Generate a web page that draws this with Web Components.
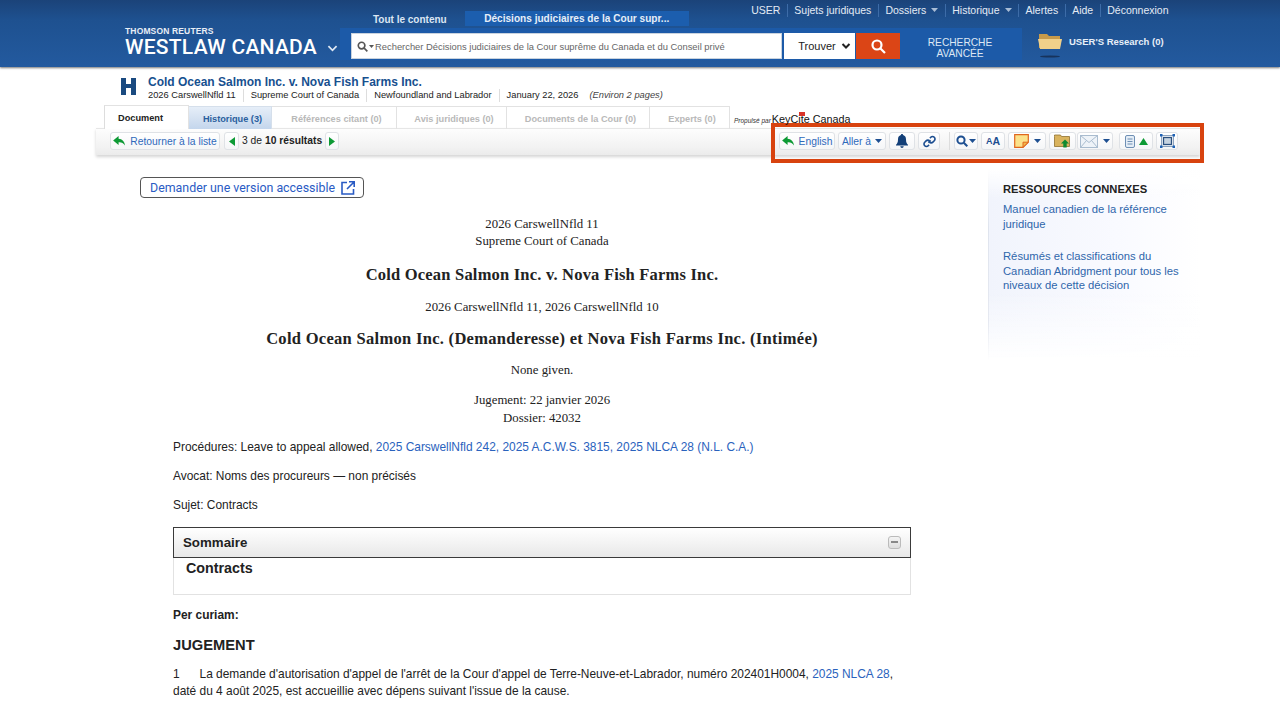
<!DOCTYPE html>
<html lang="fr">
<head>
<meta charset="utf-8">
<title>Westlaw Canada</title>
<style>
html,body{margin:0;padding:0;background:#fff;overflow:hidden}
body{font-family:"Liberation Sans",Arial,sans-serif;font-size:12px;color:#252525;height:722px;position:relative}
</style>
</head>
<body>
<wl-header></wl-header>
<wl-dochead></wl-dochead>
<wl-tabs></wl-tabs>
<wl-toolbar></wl-toolbar>
<wl-main>
  <wl-access slot="top"></wl-access>
  <wl-sidebar slot="side"></wl-sidebar>
</wl-main>
<script>
const ICONS={
  back:'<svg width="13" height="10" viewBox="0 0 14 11"><path d="M6 0 0 5l6 5V7c3-.3 5 .6 7 3.5C12.600 6 10 3.200 6 3z" fill="#0d9a35"/></svg>',
  left:'<svg width="6" height="9" viewBox="0 0 6 9"><path d="M6 0v9L0 4.500z" fill="#0d9a35"/></svg>',
  right:'<svg width="6" height="9" viewBox="0 0 6 9"><path d="M0 0v9l6-4.500z" fill="#0d9a35"/></svg>',
  caret:'<svg width="7" height="4" viewBox="0 0 7 4"><path d="M0 0h7L3.500 4z" fill="#1d4f91"/></svg>',
  bell:'<svg width="14" height="14" viewBox="0 0 14 14"><path d="M7 0c.7 0 1.100.5 1.100 1.100C10 1.700 11 3.300 11 5.500c0 3 .8 4.200 2 5.300v.7H1v-.7c1.200-1.100 2-2.300 2-5.300 0-2.200 1-3.800 2.900-4.400C5.900.5 6.300 0 7 0zM5.300 12.300h3.400C8.600 13.300 7.900 14 7 14s-1.600-.7-1.700-1.700z" fill="#123f78"/></svg>',
  link:'<svg width="13" height="13" viewBox="0 0 15 15" fill="none" stroke="#1d4f91" stroke-width="1.900"><path d="M6.200 8.800 8.800 6.200"/><path d="M8 3.600l1-1a2.800 2.800 0 0 1 4 0 2.800 2.800 0 0 1 0 4l-1.600 1.600a2.800 2.800 0 0 1-4 0"/><path d="M7 11.400l-1 1a2.800 2.800 0 0 1-4 0 2.800 2.800 0 0 1 0-4l1.600-1.600a2.800 2.800 0 0 1 4 0"/></svg>',
  search:'<svg width="12" height="12" viewBox="0 0 12 12" fill="none" stroke="#1d4f91" stroke-width="2"><circle cx="5" cy="5" r="3.600"/><path d="M7.800 7.800 11.300 11.300"/></svg>',
  note:'<svg width="15" height="14" viewBox="0 0 15 14"><path d="M.7.7h13.600v7.500L9 13.300H.7z" fill="#fbe28b" stroke="#e0671f" stroke-width="1.200"/><path d="M9 13.300V8.200h5.300z" fill="#f2b94a" stroke="#e0671f"/></svg>',
  folder:'<svg width="17" height="14" viewBox="0 0 17 14"><path d="M.5 2.500V1h6l1 1.500h8v10H.5z" fill="#d9b35e" stroke="#8f7130" stroke-width=".8"/><path d="M11 5.500 15 9.500h-2.300V13.500H9.300V9.500H7z" fill="#0d8a30"/></svg>',
  mail:'<svg width="18" height="13" viewBox="0 0 18 13" fill="#eef3f8" stroke="#a9bccf"><rect x=".5" y=".5" width="17" height="12"/><path d="M.5.500 9 7.500 17.500.5M.5 12.500 6.500 5.500M17.500 12.500l-6-7" fill="none"/></svg>',
  doc:'<svg width="10" height="13" viewBox="0 0 10 13" fill="#e4edf6" stroke="#6e8fb4"><rect x=".5" y=".5" width="9" height="12" rx="1.500"/><path d="M2.500 4h5M2.500 6.500h5M2.500 9h5" fill="none"/></svg>',
  up:'<svg width="9" height="7" viewBox="0 0 9 7"><path d="M0 7 4.500 0 9 7z" fill="#0d9a35"/></svg>',
  full:'<svg width="15" height="14" viewBox="0 0 15 14"><path d="M1.500 1.500h12v11h-12z" fill="none" stroke="#5d7da3" stroke-width=".7"/><rect x="3.500" y="3.500" width="8" height="7" fill="#c6d3e0" stroke="#2a4f7e" stroke-width="1.300"/><g fill="#1f62b5"><rect width="2.500" height="2.500"/><rect x="12.500" width="2.500" height="2.500"/><rect y="11.500" width="2.500" height="2.500"/><rect x="12.500" y="11.500" width="2.500" height="2.500"/></g></svg>'
}

// one small helper so every element below stays a few lines
function shadow(el,html){
  el.attachShadow({mode:'open'}).innerHTML=html
}

class WlHeader extends HTMLElement{
  connectedCallback(){
    shadow(this,`<style>
      :host{display:flex;height:67px;padding-left:125px;box-sizing:border-box;color:#fff;
        background:linear-gradient(#1b4379 0,#1e5190 30%,#235a9f 100%);box-shadow:0 1px 2px #777}
      .logo{width:226px;padding-top:26px;box-sizing:border-box}
      .tr{font-size:8.500px;font-weight:700;line-height:10px;color:#e8eef6;letter-spacing:.15px}
      .wl{display:flex;align-items:center;margin-top:0;font:500 21px/22px Roboto,sans-serif;letter-spacing:.25px;white-space:nowrap}
      .wl svg{margin-left:10px;margin-top:2px}
      .right{flex:1;display:flex;flex-direction:column}
      .top{display:flex;height:28px;justify-content:space-between;padding-right:105px;padding-left:15px}
      .ctabs{display:flex;align-items:flex-end;font-size:10px;font-weight:700;color:#dbe6f3}
      .ctabs span{padding-bottom:2px;height:13px;line-height:13px;margin-left:7px;margin-right:23px}
      .ctabs b{display:block;width:224px;height:15px;line-height:15px;text-align:center;background:#1c5eae;margin-bottom:2px;color:#e6eef8;font-size:10.100px;margin-left:-5px}
      nav{display:flex;height:20px;align-items:center;font-size:10.500px;color:#e4ebf5}
      nav span{padding:0 6.500px;border-left:1px solid #3d6ca8;line-height:13px;display:flex;align-items:center;gap:5px}
      nav span:first-child{border:0}
      nav svg path{fill:#a9bdd6}
      .band{display:flex;height:32px;width:682px;margin-left:-11px;padding-left:11px;box-sizing:border-box;background:#1c5aa8;align-items:flex-start}
      .bottom{display:flex;align-items:flex-start}
      .box{margin-top:5px;width:431px;height:26px;background:#fff;display:flex;align-items:center;padding-left:5px;box-sizing:border-box;
        font-size:9.400px;color:#666;gap:1px;border:1px solid #c9d3de}
      .find{margin:5px 0 0 2px;width:71px;height:26px;background:#fff;color:#222;font-size:11px;display:flex;align-items:center;justify-content:center;gap:5px;box-sizing:border-box;padding-left:10px}
      .go{margin:5px 0 0 1px;width:44px;height:26px;background:#db4516;display:flex;align-items:center;justify-content:center}
      .adv{width:122px;height:32px;text-align:center;font-size:10.200px;line-height:11px;padding:9px 2px 0 0;box-sizing:border-box;color:#dce7f4}
      .res{display:flex;align-items:flex-start;margin-left:16px;height:28px;font-size:9.500px;font-weight:700;gap:7px;color:#e8eff8;line-height:28px}
      .res svg{margin-top:4px}
    </style>
    <div class="logo"><div class="tr">THOMSON REUTERS</div>
      <div class="wl">WESTLAW CANADA<svg width="11" height="7" viewBox="0 0 9 6" fill="none" stroke="#dfe8f3" stroke-width="1.500"><path d="M1 1l3.500 3.500L8 1"/></svg></div></div>
    <div class="right">
      <div class="top">
        <div class="ctabs"><span>Tout le contenu</span><b>Décisions judiciaires de la Cour supr...</b></div>
        <nav><span>USER</span><span>Sujets juridiques</span><span>Dossiers ${ICONS.caret}</span><span>Historique ${ICONS.caret}</span><span>Alertes</span><span>Aide</span><span>Déconnexion</span></nav>
      </div>
      <div class="bottom">
        <div class="band">
          <div class="box"><svg width="11" height="11" viewBox="0 0 12 12" fill="none" stroke="#555" stroke-width="1.800"><circle cx="5" cy="5" r="3.600"/><path d="M7.800 7.800 11.300 11.300"/></svg><svg width="5" height="3" viewBox="0 0 7 4"><path d="M0 0h7L3.500 4z" fill="#555"/></svg>Rechercher Décisions judiciaires de la Cour suprême du Canada et du Conseil privé</div>
          <div class="find">Trouver <svg width="10" height="6" viewBox="0 0 9 6" fill="none" stroke="#222" stroke-width="2"><path d="M1 1l3.500 3.500L8 1"/></svg></div>
          <div class="go"><svg width="15" height="15" viewBox="0 0 15 15" fill="none" stroke="#fff" stroke-width="2.200"><circle cx="6" cy="6" r="4.500"/><path d="M9.500 9.500 14 14"/></svg></div>
          <div class="adv">RECHERCHE<br>AVANCÉE</div>
        </div>
        <div class="res"><svg width="24" height="26" viewBox="0 0 24 26"><path d="M1 2h8l2 2h11v12H1z" fill="#c79a4a"/><path d="M0 7h24l-2 10H2z" fill="#f0d08a"/><ellipse cx="12" cy="24.500" rx="10" ry="1" fill="#17335c"/></svg>USER'S Research (0)</div>
      </div>
    </div>`)
  }
}

class WlDochead extends HTMLElement{
  connectedCallback(){
    shadow(this,`<style>
      :host{display:flex;height:38px;padding:9px 0 0 121px;box-sizing:border-box;gap:12px}
      svg{margin-top:2px}
      .t{font-size:12px;font-weight:700;color:#17508f;line-height:13px}
      .m{display:flex;align-items:center;font-size:9.300px;color:#222;line-height:13px}
      .m span{padding-right:7px;margin-right:7px;border-right:1px solid #ddd}
      .m span:nth-child(4){border:0;padding-right:2px}
      .m i{margin-left:2px;color:#444}
    </style>
    <svg width="15" height="17" viewBox="0 0 15 17"><path d="M0 0h5v6h5V0h5v17h-5v-7H5v7H0z" fill="#1a4a80"/></svg>
    <div><div class="t">Cold Ocean Salmon Inc. v. Nova Fish Farms Inc.</div>
    <div class="m"><span>2026 CarswellNfld 11</span><span>Supreme Court of Canada</span><span>Newfoundland and Labrador</span><span>January 22, 2026</span><i>(Environ 2 pages)</i></div></div>`)
  }
}

class WlTabs extends HTMLElement{
  connectedCallback(){
    const tabs=[['Document',85,'on'],['Historique (3)',83,'hist'],['Références citant (0)',125,''],['Avis juridiques (0)',110,''],['Documents de la Cour (0)',143,''],['Experts (0)',80,'']]
    shadow(this,`<style>
      :host{display:flex;height:23px;margin-left:104px;position:relative;z-index:1}
      div{box-sizing:border-box;text-align:center;font-size:9.200px;font-weight:700;line-height:24px;color:#b9b9b9;border:1px solid #e2e2e2;border-left:0;border-bottom:0;height:23px;margin-top:1px;padding-left:5px}
      .on{color:#222;background:#fff;border-left:1px solid #ddd;height:24px;margin-top:0;line-height:24px;padding:0 12px 0 0}
      .hist{color:#2a5f9e;background:linear-gradient(#e6eef8,#c4d6ec);border-color:#d5dfeb}
      p{margin:8px 0 0 4px;font-size:6.500px;font-style:italic;color:#333;display:flex;align-items:baseline;gap:1px;height:14px;white-space:nowrap}
      b{font:400 10.800px "Liberation Sans",sans-serif;color:#111;position:relative}
      b::before{content:"";position:absolute;left:27px;top:-1px;width:6px;height:4px;background:#d8342a}
    </style>
    ${tabs.map(t=>`<div class="${t[2]}" style="width:${t[1]}px">${t[0]}</div>`).join('')}
    <p>Propulsé par <b>KeyCite Canada</b></p>`)
  }
}

class WlBtn extends HTMLElement{
  connectedCallback(){
    const w=this.getAttribute('w')
    shadow(this,`<style>
      :host{display:inline-flex;box-sizing:border-box;height:18px;align-items:center;justify-content:center;gap:4px;
        border:1px solid #dfe2e6;border-radius:3px;background:linear-gradient(#fff,#f5f6f7);font-size:10.300px;color:#2e69bb;${w?`width:${w}px;`:''}}
    </style><slot></slot>`)
  }
}

class WlToolbar extends HTMLElement{
  connectedCallback(){
    shadow(this,`<style>
      :host{display:flex;height:27px;margin:0 80px 0 96px;box-sizing:border-box;padding:3px 22px 0 14px;justify-content:space-between;
        background:linear-gradient(#fdfdfd,#f2f2f2 70%,#ebebeb);box-shadow:0 2px 3px #d4d4d4;border-top:1px solid #e6e6e6}
      .g{display:flex;align-items:flex-start;gap:3px}
      .count{font-size:10.300px;line-height:18px;color:#222;margin:0}
      .sep{width:1px;height:18px;background:#ddd;margin:0 1px 0 6px}
    </style>
    <div class="g">
      <wl-btn w="110">${ICONS.back}Retourner à la liste</wl-btn>
      <wl-btn w="15" style="margin-left:1px">${ICONS.left}</wl-btn>
      <span class="count">3 de <b>10 résultats</b></span>
      <wl-btn w="14">${ICONS.right}</wl-btn>
    </div>
    <div class="g">
      <wl-btn w="56">${ICONS.back}English</wl-btn>
      <wl-btn w="48">Aller à ${ICONS.caret}</wl-btn>
      <wl-btn w="26">${ICONS.bell}</wl-btn>
      <wl-btn w="22">${ICONS.link}</wl-btn>
      <span class="sep"></span>
      <wl-btn w="24" style="gap:1px">${ICONS.search}${ICONS.caret}</wl-btn>
      <wl-btn w="24" style="color:#1d4f91;font-weight:700;font-size:10.500px;gap:0"><span style="font-size:9px">A</span>A</wl-btn>
      <wl-btn w="38" style="gap:5px">${ICONS.note}${ICONS.caret}</wl-btn>
      <wl-btn w="27">${ICONS.folder}</wl-btn>
      <wl-btn w="36" style="margin-left:-2px;gap:5px">${ICONS.mail}${ICONS.caret}</wl-btn>
      <wl-btn w="34" style="margin-left:3px">${ICONS.doc}${ICONS.up}</wl-btn>
      <wl-btn w="22">${ICONS.full}</wl-btn>
    </div>`)
  }
}

class WlAccess extends HTMLElement{
  connectedCallback(){
    shadow(this,`<style>
      :host{display:flex;box-sizing:border-box;width:224px;height:21px;margin-left:44px;align-items:center;gap:6px;padding-left:9px;
        border:1.500px solid #555;border-radius:4px;font:400 12.400px Roboto,sans-serif;color:#2a5bc4;white-space:nowrap}
    </style>Demander une version accessible
    <svg width="14" height="14" viewBox="0 0 14 14" fill="none" stroke="#2a5bc4" stroke-width="1.600"><path d="M6 1.500H1v11.500h11.500V8M8 .8h5.200V6M13 1 6 8"/></svg>`)
  }
}

class WlSidebar extends HTMLElement{
  connectedCallback(){
    shadow(this,`<style>
      :host{display:block;width:212px;height:190px;box-sizing:border-box;padding:12px 15px 0 14px;margin-top:-7px;
        background:linear-gradient(#fff0 65%,#fff),linear-gradient(#fff,#fff0 15%),linear-gradient(to right,#f1f4fc,#f9faff 60%,#fff);
        border-left:1px solid;border-image:linear-gradient(#fff,#dfe4ee 30%,#e6e9f1 80%,#fff) 1;font-size:11.250px;line-height:14.500px;color:#2f66ab}
      h3{margin:0 0 6px;font-size:11.200px;font-weight:700;color:#222;line-height:14px}
      p{margin:0 0 18px}
    </style>
    <h3>RESSOURCES CONNEXES</h3>
    <p>Manuel canadien de la référence juridique</p>
    <p>Résumés et classifications du Canadian Abridgment pour tous les niveaux de cette décision</p>`)
  }
}

class WlMain extends HTMLElement{
  connectedCallback(){
    shadow(this,`<style>
      :host{display:block;margin-left:96px;padding-top:22px;width:1104px;position:relative}
      .cols{display:grid;grid-template-columns:892px 212px}
      .doc{padding:0 0 0 77px;width:738px;font-size:11.930px;line-height:17px;color:#222}
      .top{height:21px;margin-bottom:18px}
      .c{width:738px;text-align:center;font:12.800px/17.500px "Liberation Serif",serif}
      .h{font:700 16.500px/20px "Liberation Serif",serif;width:738px;text-align:center;letter-spacing:.2px}
      p{margin:0}
      a{color:#2a62bd}
      .sum{margin-top:13px;border:1px solid #e2e2e2;border-top:0;height:67px}
      .bar{height:31px;margin:0 -1px;box-sizing:border-box;border:1px solid #3a3a3a;background:linear-gradient(#fff,#e8e8e8);display:flex;align-items:center;justify-content:space-between;padding:0 9px;font-size:13.300px;font-weight:700}
      .bar i{display:block;width:11px;height:11px;border:1px solid #bbb;border-radius:3px;background:linear-gradient(#f4f4f4,#ddd);position:relative}
      .bar i::after{content:"";position:absolute;left:2px;right:2px;top:4px;height:2px;background:#888}
      .con{font-size:14.300px;font-weight:700;padding-left:12px;line-height:18px;margin-top:1px}
    </style>
    <div class="cols"><div>
      <div class="top"><slot name="top"></slot></div>
      <div class="doc">
        <div class="c" style="line-height:17px">2026 CarswellNfld 11<br>Supreme Court of Canada</div>
        <div class="h" style="margin-top:15px">Cold Ocean Salmon Inc. v. Nova Fish Farms Inc.</div>
        <div class="c" style="margin-top:14px">2026 CarswellNfld 11, 2026 CarswellNfld 10</div>
        <div class="h" style="margin-top:12px;letter-spacing:.3px">Cold Ocean Salmon Inc. (Demanderesse) et Nova Fish Farms Inc. (Intimée)</div>
        <div class="c" style="margin-top:13px">None given.</div>
        <div class="c" style="margin-top:12px;line-height:18px">Jugement: 22 janvier 2026<br>Dossier: 42032</div>
        <p style="margin-top:12px">Procédures: Leave to appeal allowed, <a>2025 CarswellNfld 242, 2025 A.C.W.S. 3815, 2025 NLCA 28 (N.L. C.A.)</a></p>
        <p style="margin-top:12px">Avocat: Noms des procureurs — non précisés</p>
        <p style="margin-top:12px">Sujet: Contracts</p>
        <div class="sum"><div class="bar">Sommaire<i></i></div><div class="con">Contracts</div></div>
        <p style="margin-top:12px;font-weight:700">Per curiam:</p>
        <p style="margin-top:12px;font-size:14.700px;font-weight:700;line-height:18px">JUGEMENT</p>
        <p style="margin-top:12px">1&nbsp;&nbsp;&nbsp;&nbsp;&nbsp;&nbsp;La demande d'autorisation d'appel de l'arrêt de la Cour d'appel de Terre-Neuve-et-Labrador, numéro 202401H0004, <a>2025 NLCA 28</a>,<br>daté du 4 août 2025, est accueillie avec dépens suivant l'issue de la cause.</p>
      </div></div>
      <div><slot name="side"></slot></div>
    </div>`)
  }
}

// the orange highlight sits over the toolbar
class WlHighlight extends HTMLElement{
  connectedCallback(){
    shadow(this,`<style>
      :host{position:absolute;left:771px;top:123px;width:433px;height:40px;box-sizing:border-box;border:4.500px solid #d8430f;pointer-events:none}
    </style>`)
  }
}

customElements.define('wl-btn',WlBtn)
customElements.define('wl-header',WlHeader)
customElements.define('wl-dochead',WlDochead)
customElements.define('wl-tabs',WlTabs)
customElements.define('wl-toolbar',WlToolbar)
customElements.define('wl-access',WlAccess)
customElements.define('wl-sidebar',WlSidebar)
customElements.define('wl-main',WlMain)
customElements.define('wl-highlight',WlHighlight)
document.body.appendChild(document.createElement('wl-highlight'))
</script>
</body>
</html>
